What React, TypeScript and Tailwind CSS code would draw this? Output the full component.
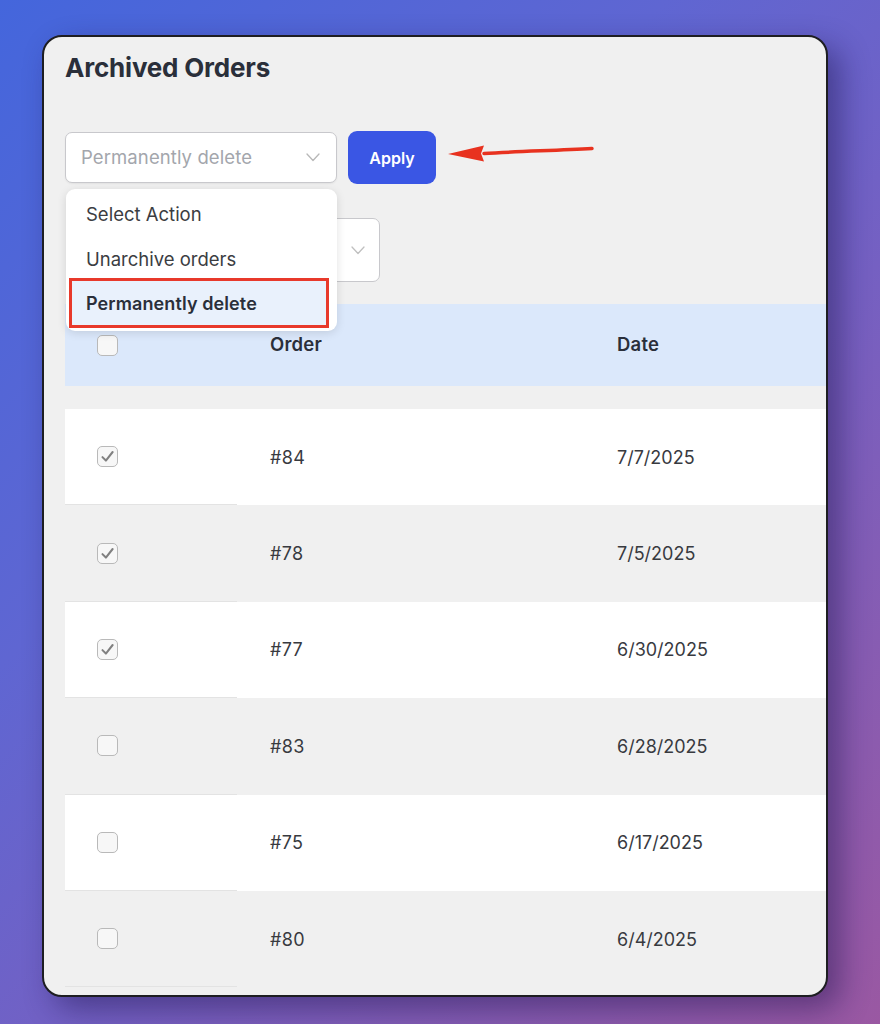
import React from "react";

const rows = [
  { id: "#84", date: "7/7/2025", checked: true },
  { id: "#78", date: "7/5/2025", checked: true },
  { id: "#77", date: "6/30/2025", checked: true },
  { id: "#83", date: "6/28/2025", checked: false },
  { id: "#75", date: "6/17/2025", checked: false },
  { id: "#80", date: "6/4/2025", checked: false },
];

function Checkbox({ checked }: { checked: boolean }) {
  return (
    <div className="w-[21px] h-[21px] rounded-[5px] border-[1.5px] border-[#b9b9b9] bg-[#f7f7f7] flex items-center justify-center">
      {checked && (
        <svg width="15" height="15" viewBox="0 0 14 14" fill="none">
          <path d="M2.3 7.6 L5.5 10.8 L11.8 2.8" stroke="#808080" strokeWidth="1.9" strokeLinecap="round" strokeLinejoin="round" />
        </svg>
      )}
    </div>
  );
}

function Chevron({ color = "#b8b8b8" }: { color?: string }) {
  return (
    <svg width="14" height="9" viewBox="0 0 14 9" fill="none">
      <path d="M1 1 L7 7.5 L13 1" stroke={color} strokeWidth="1.3" strokeLinecap="round" strokeLinejoin="round" />
    </svg>
  );
}

export default function App() {
  return (
    <div
      className="min-h-[1024px] w-full pt-[35px] pl-[42px]"
      style={{
        fontFamily: "Inter, 'Noto Sans', 'Liberation Sans', sans-serif",
        background: "linear-gradient(135deg, #4466dc 0%, #5f66d2 35%, #7560c2 60%, #9a58a2 100%)",
      }}
    >
      <div className="relative w-[786px] h-[962px] rounded-[20px] border-2 border-[#1e1e22] bg-[#f0f0f0] overflow-hidden shadow-[12px_12px_30px_rgba(25,15,70,0.45)]">
        <div className="pl-[21px] pt-[15px]">
          <h1 className="text-[26px] leading-[32px] font-bold text-[#2a2f3a] tracking-[-0.2px]">Archived Orders</h1>

          <div className="mt-[47px] flex items-center gap-[11px]">
            <div className="relative">
              <div className="w-[272px] h-[51px] rounded-[7px] border border-[#c8c8cc] bg-white flex items-center justify-between pl-[15px] pr-[16px] shadow-[0_1px_2px_rgba(0,0,0,0.06)]">
                <span className="text-[18.5px] text-[#a3a6ac] tracking-[0.1px]">Permanently delete</span>
                <Chevron />
              </div>
              <div className="absolute z-20 left-[1px] top-[57px] w-[271px] h-[142px] rounded-[9px] bg-white shadow-[0_2px_10px_rgba(0,0,0,0.12)] pt-[13px]">
                <div className="h-[44px] pl-[20px] text-[18.5px] leading-[24px] text-[#3b3d42]">Select Action</div>
                <div className="h-[44px] pl-[20px] text-[18.5px] leading-[0px] text-[#3b3d42] pt-[13px]">Unarchive orders</div>
                <div className="absolute left-[3px] top-[89px] w-[260px] h-[50px] border-[3px] border-[#e8392b] bg-[#e9f1fc] flex items-center pl-[14px]">
                  <span className="text-[18px] font-semibold text-[#2a2f3a] tracking-[0.1px]">Permanently delete</span>
                </div>
              </div>
            </div>
            <button className="w-[88px] h-[53px] rounded-[9px] bg-[#3a56e4] text-white text-[16px] font-semibold">Apply</button>
          </div>

          <div className="mt-[34px] flex">
            <div className="ml-[160px] w-[155px] h-[64px] rounded-[7px] border border-[#c8c8cc] bg-white flex items-center justify-end pr-[14px]">
              <Chevron color="#c0c0c0" />
            </div>
          </div>

          <div className="mt-[22px]">
            <div className="h-[82px] bg-[#dbe8fb] grid grid-cols-[172px_347px_1fr] items-center text-[18.5px] font-semibold text-[#2a2f3a] tracking-[0.2px]">
              <div className="pl-[32px]"><Checkbox checked={false} /></div>
              <div className="pl-[33px]">Order</div>
              <div className="pl-[33px]">Date</div>
            </div>
            <div className="h-[23px]" />
            {rows.map((r, i) => (
              <div
                key={r.id}
                className={`h-[96.4px] grid grid-cols-[172px_347px_1fr] items-stretch text-[18px] text-[#383a3f] ${i % 2 === 0 ? "bg-white" : ""}`}
              >
                <div className="pl-[32px] flex items-center border-b border-[#e3e3e3]"><Checkbox checked={r.checked} /></div>
                <div className="pl-[33px] flex items-center tracking-[0.3px]">{r.id}</div>
                <div className="pl-[33px] flex items-center">{r.date}</div>
              </div>
            ))}
          </div>
        </div>

        <svg className="absolute left-[402px] top-[104px]" width="152" height="24" viewBox="0 0 152 24" fill="none">
          <path d="M38 12.5 C70 10.5 110 9.5 146 7.5" stroke="#e8321f" strokeWidth="3.5" strokeLinecap="round" />
          <path d="M2 13 L38 4.5 L35 12.5 L38 20.5 Z" fill="#e8321f" />
        </svg>
      </div>
    </div>
  );
}
